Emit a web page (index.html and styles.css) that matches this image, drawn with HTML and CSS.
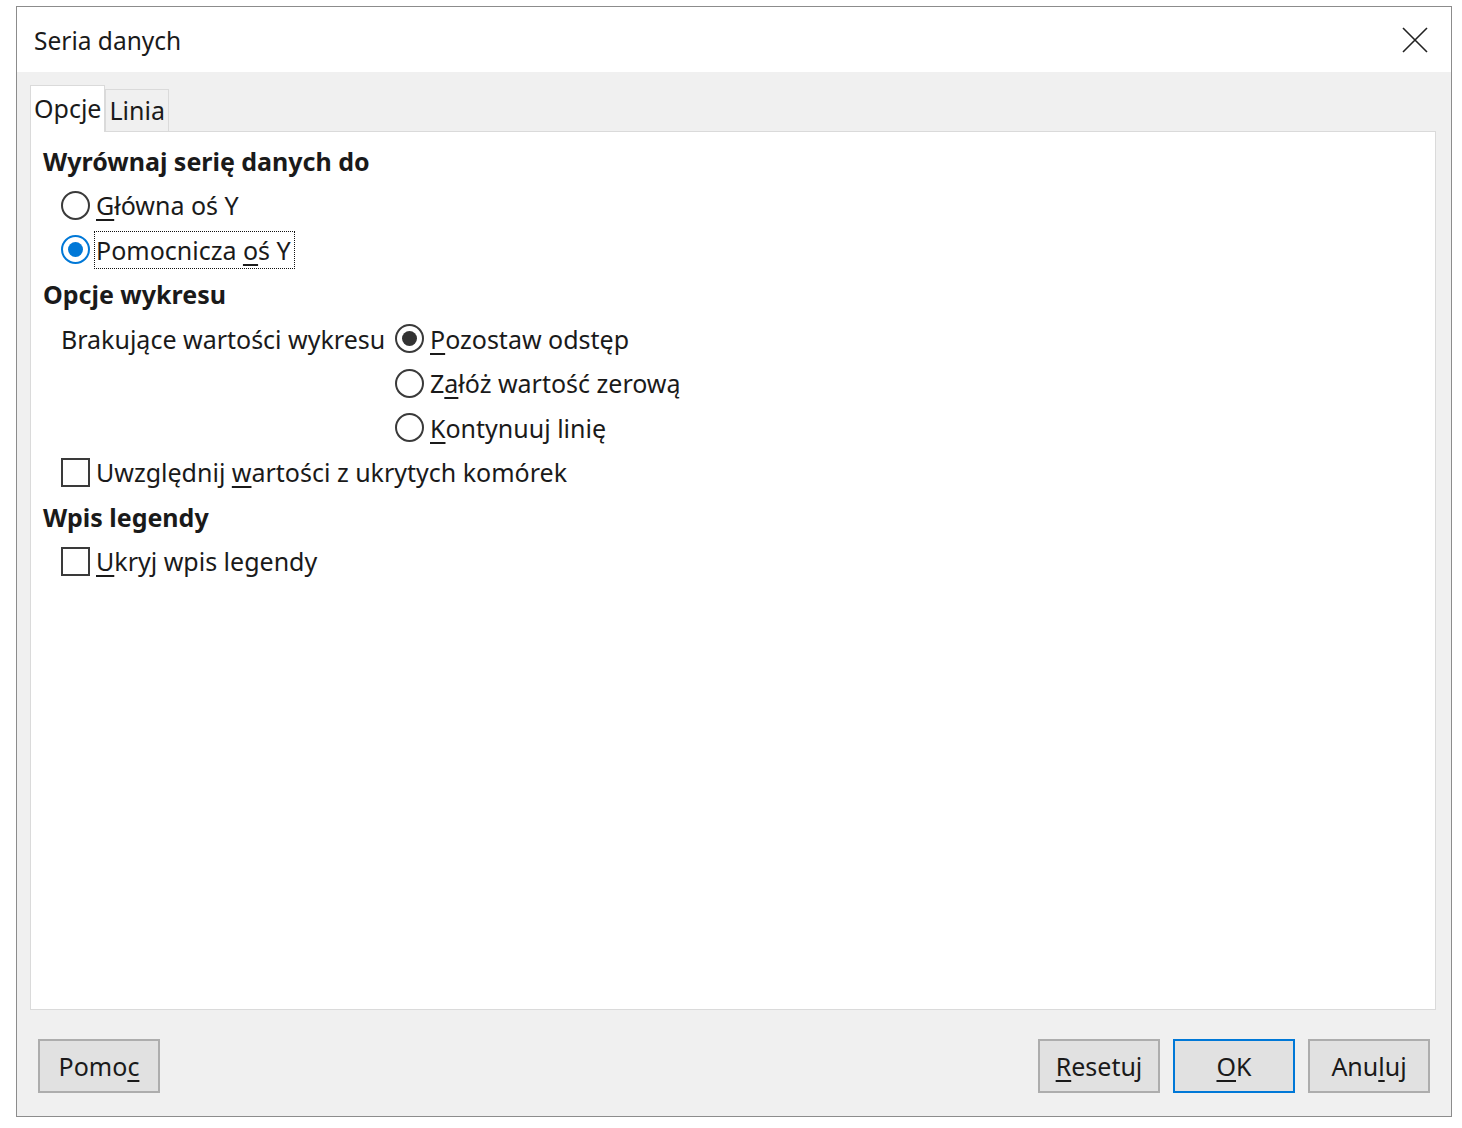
FILE: index.html
```html
<!DOCTYPE html>
<html>
<head>
<meta charset="utf-8">
<link rel="stylesheet" href="styles.css">
</head>
<body>
  <div class="dialog">
    <div class="titlebar">
      <span class="title">Seria danych</span>
      <svg class="close" width="26" height="26" viewBox="0 0 26 26">
        <path d="M1 1 L25 25 M25 1 L1 25" stroke="#222" stroke-width="1.6" fill="none"/>
      </svg>
    </div>

    <div class="content">
      <div class="tabs">
        <div class="tab active">Opcje</div>
        <div class="tab">Linia</div>
      </div>

      <div class="panel">
        <div class="heading">Wyrównaj serię danych do</div>
        <div class="group">
          <div class="row">
            <span class="radio"></span>
            <span class="label"><u>G</u>łówna oś Y</span>
          </div>
          <div class="row">
            <span class="radio checked-blue"></span>
            <span class="label focus">Pomocnicza <u>o</u>ś Y</span>
          </div>
        </div>

        <div class="heading">Opcje wykresu</div>
        <div class="group">
          <div class="missing">
            <div class="row missing-label">Brakujące wartości wykresu</div>
            <div class="missing-options">
              <div class="row">
                <span class="radio checked"></span>
                <span class="label"><u>P</u>ozostaw odstęp</span>
              </div>
              <div class="row">
                <span class="radio"></span>
                <span class="label">Z<u>a</u>łóż wartość zerową</span>
              </div>
              <div class="row">
                <span class="radio"></span>
                <span class="label"><u>K</u>ontynuuj linię</span>
              </div>
            </div>
          </div>
          <div class="row">
            <span class="checkbox"></span>
            <span class="label">Uwzględnij <u>w</u>artości z ukrytych komórek</span>
          </div>
        </div>

        <div class="heading">Wpis legendy</div>
        <div class="group">
          <div class="row">
            <span class="checkbox"></span>
            <span class="label"><u>U</u>kryj wpis legendy</span>
          </div>
        </div>
      </div>

      <div class="buttons">
        <button class="btn">Pomo<u>c</u></button>
        <div class="spacer"></div>
        <button class="btn"><u>R</u>esetuj</button>
        <button class="btn default"><u>O</u>K</button>
        <button class="btn">Anu<u>l</u>uj</button>
      </div>
    </div>
  </div>
</body>
</html>
```

FILE: styles.css
```css
body {
  margin: 0;
  padding: 0;
  background-color: white;
  font-family: "Noto Sans", "Open Sans", sans-serif;
  font-size: 25px;
  color: #1a1a1a;
}

.dialog {
  margin: 6px 0 0 16px;
  width: 1434px;
  height: 1109px;
  border: 1px solid #8c8c8c;
  background-color: #f0f0f0;
  display: flex;
  flex-direction: column;
}

.titlebar {
  height: 65px;
  background-color: white;
  display: flex;
  align-items: center;
  justify-content: space-between;
  padding: 0 23px 0 17px;
}

.title {
  font-size: 24.5px;
  margin-top: 1px;
}

.close {
  margin-top: 1px;
}

.content {
  flex: 1;
  display: flex;
  flex-direction: column;
  padding: 13px 15px 22px 13px;
}

.tabs {
  display: flex;
  align-items: flex-end;
  height: 46px;
}

.tab {
  height: 42px;
  line-height: 40px;
  padding: 0 3px;
  border: 1px solid #dadada;
  border-bottom: none;
  background-color: #f0f0f0;
  box-sizing: border-box;
}

.tab.active {
  height: 47px;
  line-height: 44px;
  background-color: white;
  border-color: #dadada;
  margin-bottom: -1px;
  position: relative;
  z-index: 1;
}

.panel {
  height: 879px;
  box-sizing: border-box;
  background-color: white;
  border: 1px solid #dadada;
  padding: 6.5px 12px;
}

.heading {
  font-weight: bold;
  height: 44.5px;
  line-height: 44.5px;
}

.group {
  padding-left: 18px;
}

.row {
  display: flex;
  align-items: center;
  height: 44.5px;
}

.missing {
  display: flex;
}

.missing-label {
  align-items: flex-start;
  line-height: 44.5px;
  width: 334px;
}

.radio {
  width: 29px;
  height: 29px;
  border: 2px solid #3a3a3a;
  border-radius: 50%;
  box-sizing: border-box;
  display: flex;
  align-items: center;
  justify-content: center;
  margin-right: 6px;
  flex-shrink: 0;
}

.radio.checked::after,
.radio.checked-blue::after {
  content: "";
  width: 15px;
  height: 15px;
  border-radius: 50%;
  background-color: #333;
}

.radio.checked-blue {
  border-color: #0078d7;
}

.radio.checked-blue::after {
  background-color: #0078d7;
}

.checkbox {
  width: 29px;
  height: 29px;
  border: 2px solid #3a3a3a;
  box-sizing: border-box;
  margin-right: 6px;
  flex-shrink: 0;
}

.label u,
.btn u {
  text-underline-offset: 4px;
  text-decoration-thickness: 2px;
}

.focus {
  outline: 1px dotted #111;
  outline-offset: 1px;
  padding-right: 2px;
}

.buttons {
  display: flex;
  margin-top: 29px;
  padding: 0 6px 0 8px;
  gap: 13px;
}

.spacer {
  flex: 1;
}

.btn {
  width: 122px;
  height: 54px;
  background-color: #e1e1e1;
  border: 2px solid #adadad;
  font-family: inherit;
  font-size: 25px;
  color: #1a1a1a;
  padding: 0;
}

.btn.default {
  border-color: #0078d7;
}
```
